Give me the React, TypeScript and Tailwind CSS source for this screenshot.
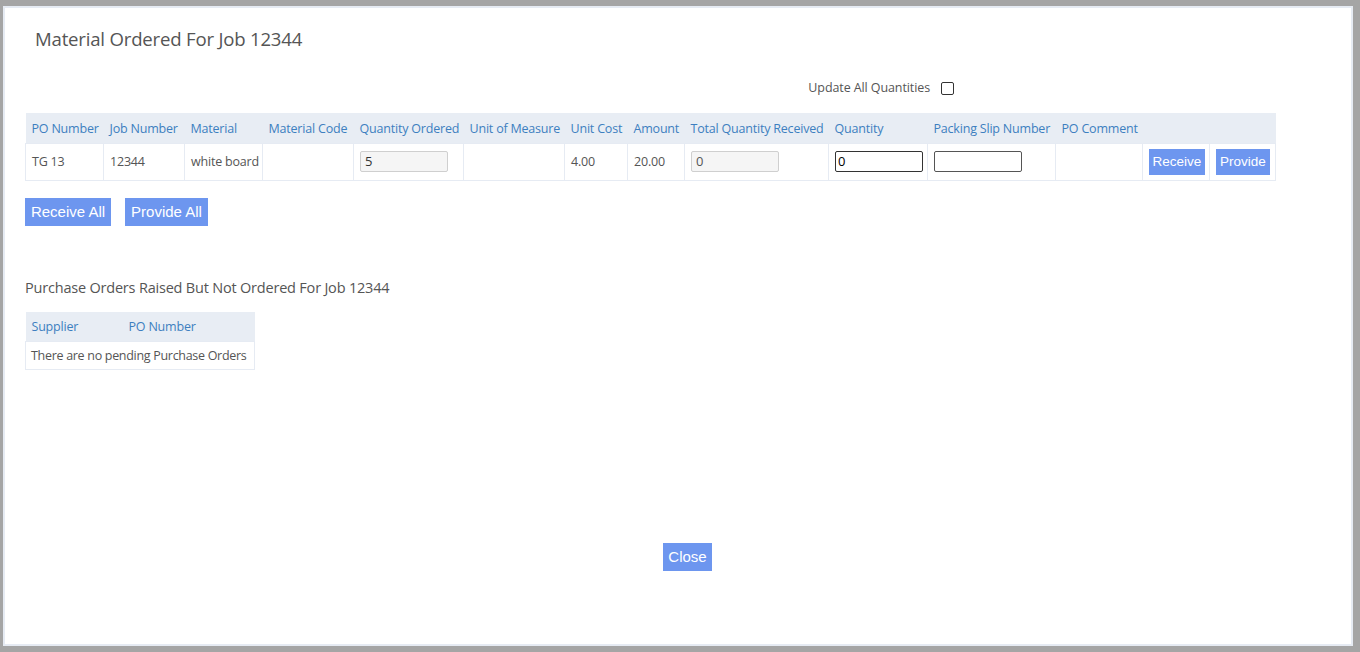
import React from "react";

const cols: { label: string; w: string }[] = [
  { label: "PO Number", w: "w-[78px]" },
  { label: "Job Number", w: "w-[81px]" },
  { label: "Material", w: "w-[78px]" },
  { label: "Material Code", w: "w-[91px]" },
  { label: "Quantity Ordered", w: "w-[110px]" },
  { label: "Unit of Measure", w: "w-[101px]" },
  { label: "Unit Cost", w: "w-[63px]" },
  { label: "Amount", w: "w-[57px]" },
  { label: "Total Quantity Received", w: "w-[144px]" },
  { label: "Quantity", w: "w-[99px]" },
  { label: "Packing Slip Number", w: "w-[128px]" },
  { label: "PO Comment", w: "w-[87px]" },
  { label: "", w: "w-[67px]" },
  { label: "", w: "w-[66px]" },
];

const font = { fontFamily: '"Open Sans", "Noto Sans", sans-serif' };
const arial = { fontFamily: '"Liberation Sans", Arial, sans-serif' };

const td = "border border-[#e6ebf3] px-[6px] whitespace-nowrap overflow-hidden";
const tdt = `${td} pt-[2px] tracking-[-0.2px]`;

export default function App() {
  return (
    <div className="w-[1360px] h-[652px] bg-[#a5a5a5] pt-[6px] pl-[3px] overflow-hidden">
      <div
        className="w-[1350px] h-[640px] bg-white border-2 border-[#e6ebf3] text-[#555]"
        style={font}
      >
        <div className="pl-[30px] pt-[18px] text-[18.6px] leading-[26px] text-[#555] tracking-[-0.2px]">
          Material Ordered For Job 12344
        </div>
        <div className="flex justify-end items-center pr-[397px] mt-[26px] h-[20px]">
          <span className="text-[12.5px] text-[#555] tracking-[-0.1px] pt-[1px]">Update All Quantities</span>
          <span className="ml-[11px] w-[13px] h-[13px] border border-[#333] rounded-[2px] bg-white inline-block" />
        </div>
        <div className="pl-[20px] mt-[15px]">
          <table className="table-fixed w-[1250px] border-collapse text-[12.5px]">
            <thead>
              <tr className="bg-[#e8edf4] h-[30px]">
                {cols.map((c, i) => (
                  <th
                    key={i}
                    className={`${c.w} text-left font-normal text-[#3d7fc0] px-[6px] pt-[4px] whitespace-nowrap overflow-hidden tracking-[-0.2px]`}
                  >
                    {c.label}
                  </th>
                ))}
              </tr>
            </thead>
            <tbody>
              <tr className="h-[37px]">
                <td className={tdt}>TG 13</td>
                <td className={tdt}>12344</td>
                <td className={tdt}>white board</td>
                <td className={td}></td>
                <td className={td}>
                  <div className="w-[88px] h-[21px] border border-[#cfcfcf] rounded-[2px] bg-[#f5f5f5] text-[13px] leading-[19px] pl-[4px] text-[#333]">
                    5
                  </div>
                </td>
                <td className={td}></td>
                <td className={tdt}>4.00</td>
                <td className={tdt}>20.00</td>
                <td className={td}>
                  <div className="w-[88px] h-[21px] border border-[#cfcfcf] rounded-[2px] bg-[#f5f5f5] text-[13px] leading-[19px] pl-[4px] text-[#555]">
                    0
                  </div>
                </td>
                <td className={td}>
                  <div className="w-[88px] h-[21px] border border-[#333] rounded-[2px] bg-white text-[13px] leading-[19px] pl-[2px] text-black">
                    0
                  </div>
                </td>
                <td className={td}>
                  <div className="w-[88px] h-[21px] border border-[#555] rounded-[2px] bg-white" />
                </td>
                <td className={td}></td>
                <td className={td}>
                  <div
                    className="w-[56px] h-[26px] bg-[#6d96ef] text-white text-[13.5px] leading-[26px] text-center"
                    style={arial}
                  >
                    Receive
                  </div>
                </td>
                <td className={td}>
                  <div
                    className="w-[54px] h-[26px] bg-[#6d96ef] text-white text-[13.5px] leading-[26px] text-center"
                    style={arial}
                  >
                    Provide
                  </div>
                </td>
              </tr>
            </tbody>
          </table>
          <div className="flex gap-[14px] mt-[17px]" style={arial}>
            <div className="w-[86px] h-[28px] bg-[#6d96ef] text-white text-[15px] leading-[28px] text-center">
              Receive All
            </div>
            <div className="w-[83px] h-[28px] bg-[#6d96ef] text-white text-[15px] leading-[28px] text-center">
              Provide All
            </div>
          </div>
          <div className="mt-[51px] text-[14.5px] leading-[22px] text-[#555] tracking-[-0.2px]">
            Purchase Orders Raised But Not Ordered For Job 12344
          </div>
          <table className="table-fixed w-[229px] mt-[13px] border-collapse text-[12.5px]">
            <thead>
              <tr className="bg-[#e8edf4] h-[30px]">
                <th className="w-[97px] text-left font-normal text-[#3d7fc0] px-[6px] pt-[3px] tracking-[-0.2px]">Supplier</th>
                <th className="w-[132px] text-left font-normal text-[#3d7fc0] px-[6px] pt-[3px] tracking-[-0.2px]">PO Number</th>
              </tr>
            </thead>
            <tbody>
              <tr className="h-[28px]">
                <td colSpan={2} className="border border-[#e6ebf3] px-[5px] pt-[2px] whitespace-nowrap overflow-hidden tracking-[-0.3px]">
                  There are no pending Purchase Orders
                </td>
              </tr>
            </tbody>
          </table>
        </div>
        <div className="flex justify-center mt-[173px] pl-[19px]">
          <div
            className="w-[49px] h-[28px] bg-[#6d96ef] text-white text-[15px] leading-[28px] text-center"
            style={arial}
          >
            Close
          </div>
        </div>
      </div>
    </div>
  );
}
